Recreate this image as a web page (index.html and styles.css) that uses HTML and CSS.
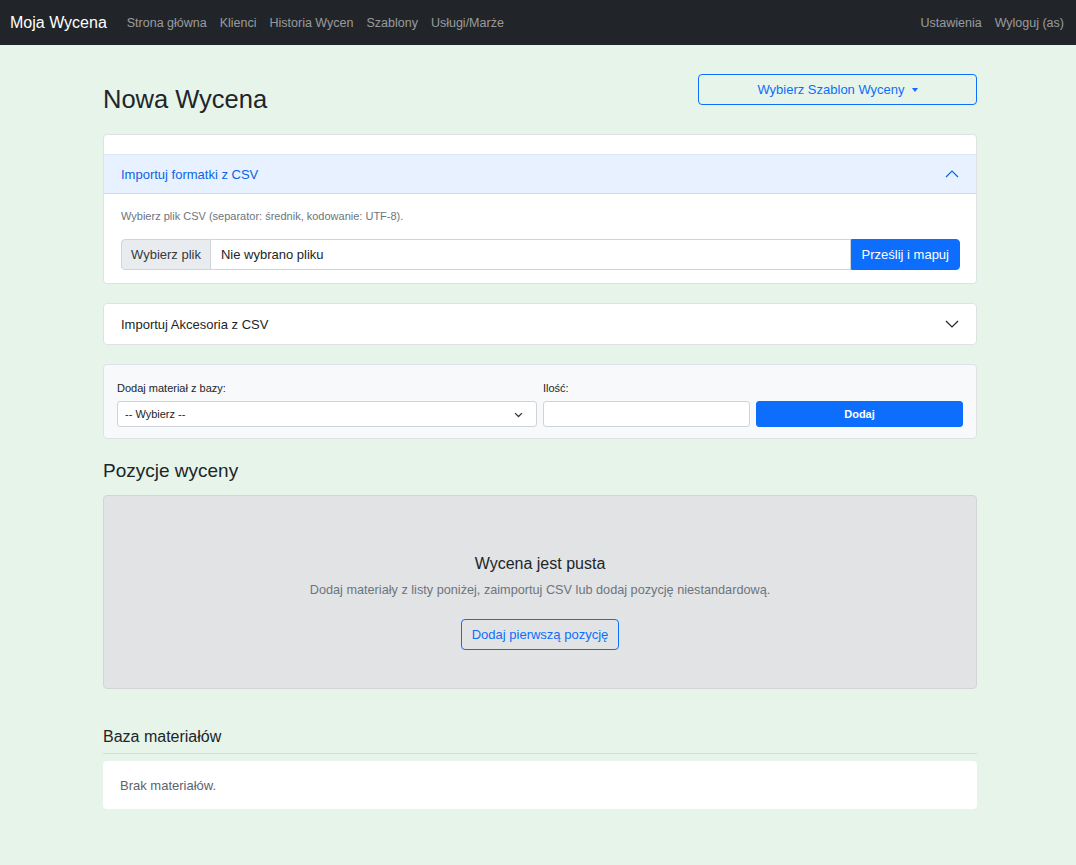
FILE: index.html
```html
<!DOCTYPE html>
<html lang="pl">
<head>
  <meta charset="UTF-8" />
  <link rel="stylesheet" href="styles.css">
</head>
<body>
  <nav class="navbar">
    <a class="brand" href="#">Moja Wycena</a>
    <ul class="nav-links">
      <li><a href="#">Strona główna</a></li>
      <li><a href="#">Klienci</a></li>
      <li><a href="#">Historia Wycen</a></li>
      <li><a href="#">Szablony</a></li>
      <li><a href="#">Usługi/Marże</a></li>
    </ul>
    <ul class="nav-links nav-right">
      <li><a href="#">Ustawienia</a></li>
      <li><a href="#">Wyloguj (as)</a></li>
    </ul>
  </nav>

  <main class="container">
    <div class="page-head">
      <h2>Nowa Wycena</h2>
      <button class="btn btn-outline dropdown-toggle">Wybierz Szablon Wyceny</button>
    </div>

    <!-- Import formatek -->
    <div class="card accordion">
      <div class="accordion-spacer"></div>
      <div class="accordion-header active">
        <span>Importuj formatki z CSV</span>
        <svg class="chevron" width="16" height="16" viewBox="0 0 16 16"><path d="M2 11 L8 5 L14 11" fill="none" stroke="currentColor" stroke-width="1.2"/></svg>
      </div>
      <div class="accordion-body">
        <p class="hint">Wybierz plik CSV (separator: średnik, kodowanie: UTF-8).</p>
        <div class="input-group">
          <span class="file-label">Wybierz plik</span>
          <span class="file-name">Nie wybrano pliku</span>
          <button class="btn btn-primary">Prześlij i mapuj</button>
        </div>
      </div>
    </div>

    <!-- Import akcesoriów -->
    <div class="card accordion">
      <div class="accordion-header">
        <span>Importuj Akcesoria z CSV</span>
        <svg class="chevron" width="16" height="16" viewBox="0 0 16 16"><path d="M2 5 L8 11 L14 5" fill="none" stroke="currentColor" stroke-width="1.2"/></svg>
      </div>
    </div>

    <!-- Dodaj materiał -->
    <div class="card add-card">
      <div class="add-grid">
        <label>Dodaj materiał z bazy:</label>
        <label>Ilość:</label>
        <span></span>
        <div class="select">
          <span>-- Wybierz --</span>
          <svg width="11" height="11" viewBox="0 0 16 16"><path d="M3 6 L8 11 L13 6" fill="none" stroke="#343a40" stroke-width="2"/></svg>
        </div>
        <div class="input"></div>
        <button class="btn btn-primary btn-sm">Dodaj</button>
      </div>
    </div>

    <h4 class="section-title">Pozycje wyceny</h4>
    <div class="empty-box">
      <h5>Wycena jest pusta</h5>
      <p>Dodaj materiały z listy poniżej, zaimportuj CSV lub dodaj pozycję niestandardową.</p>
      <button class="btn btn-outline">Dodaj pierwszą pozycję</button>
    </div>

    <h5 class="base-title">Baza materiałów</h5>
    <div class="card base-card">Brak materiałów.</div>
  </main>
</body>
</html>
```

FILE: styles.css
```css
:root {
  --primary: #0d6efd;
  --primary-dark: #0c63e4;
  --text-dark: #212529;
  --muted: #6c757d;
  --border: #dee2e6;
  --font-base: 'Liberation Sans', Arial, sans-serif;
}
*, *::before, *::after { box-sizing: border-box; }
body {
  margin: 0;
  font-family: var(--font-base);
  background: #e6f4e9;
  color: var(--text-dark);
  font-size: 13px;
}
a { text-decoration: none; }
ul { list-style: none; margin: 0; padding: 0; }
h2, h4, h5, p { margin: 0; font-weight: 400; }
button { font-family: inherit; cursor: pointer; }

/* Navbar */
.navbar {
  height: 45px;
  background: #212529;
  display: flex;
  align-items: center;
  padding: 0 12px 0 10px;
}
.brand { color: #fff; font-size: 16px; margin-right: 20px; }
.nav-links { display: flex; gap: 13px; }
.nav-links a { color: rgba(255,255,255,0.55); font-size: 12.5px; }
.nav-right { margin-left: auto; }

/* Page */
.container { width: 874px; margin: 0 99px 0 103px; padding-bottom: 56px; }
.page-head {
  display: flex;
  justify-content: space-between;
  align-items: flex-start;
  margin: 29px 0 19px;
}
.page-head h2 { font-size: 25.5px; line-height: 31px; margin-top: 10px; }

.btn {
  border-radius: 4px;
  font-size: 13px;
  height: 31px;
  padding: 0 12px;
  border: 1px solid transparent;
}
.btn-outline { background: transparent; color: var(--primary); border-color: var(--primary); }
.btn-primary { background: var(--primary); color: #fff; border-color: var(--primary); }
.btn-sm { font-size: 11px; font-weight: 700; height: 26px; border-radius: 3px; }
.dropdown-toggle { width: 279px; }
.dropdown-toggle::after {
  content: "";
  display: inline-block;
  margin-left: 7px;
  vertical-align: 2px;
  border-top: 4px solid;
  border-left: 3px solid transparent;
  border-right: 3px solid transparent;
}

.card {
  background: #fff;
  border: 1px solid var(--border);
  border-radius: 4px;
  margin-bottom: 19px;
}

/* Accordion */
.accordion-spacer { height: 19px; }
.accordion-header {
  height: 40px;
  display: flex;
  align-items: center;
  justify-content: space-between;
  padding: 0 16px 0 17px;
  font-size: 13px;
}
.accordion-header.active {
  background: #e7f1ff;
  color: var(--primary-dark);
  border-top: 1px solid #dbe7f8;
  border-bottom: 1px solid #c9dbf3;
}
.chevron { color: var(--text-dark); }
.accordion-header.active .chevron { color: var(--primary-dark); }
.accordion-body { padding: 15px 16px 13px 17px; }
.hint { font-size: 11px; color: var(--muted); line-height: 14px; margin-bottom: 16px; }
.input-group { display: flex; height: 31px; }
.file-label {
  display: flex;
  align-items: center;
  padding: 0 9px;
  background: #e9ecef;
  border: 1px solid #ced4da;
  border-radius: 4px 0 0 4px;
  color: #343a40;
}
.file-name {
  flex: 1;
  display: flex;
  align-items: center;
  padding: 0 10px;
  border: 1px solid #ced4da;
  border-left: none;
}
.input-group .btn { border-radius: 0 4px 4px 0; padding: 0 10px; }

/* Add material */
.add-card { background: #f8f9fa; padding: 16px 13px 11px 13px; margin-bottom: 21px; }
.add-grid {
  display: grid;
  grid-template-columns: 420px 1fr 1fr;
  column-gap: 6px;
  row-gap: 6px;
}
.add-grid label { font-size: 11px; line-height: 14px; }
.select, .input {
  height: 26px;
  background: #fff;
  border: 1px solid #ced4da;
  border-radius: 3px;
}
.select {
  display: flex;
  align-items: center;
  justify-content: space-between;
  padding: 0 12px 0 7px;
  font-size: 11px;
}

/* Positions */
.section-title { font-size: 19px; line-height: 22px; margin: 3px 0 13px; }
.empty-box {
  background: #e2e3e5;
  border: 1px solid #d3d6d8;
  border-radius: 4px;
  height: 194px;
  padding-top: 58px;
  text-align: center;
  margin-bottom: 38px;
}
.empty-box h5 { font-size: 16px; line-height: 20px; margin-bottom: 8px; }
.empty-box p { font-size: 12.7px; color: var(--muted); line-height: 16px; margin-bottom: 21px; }
.empty-box .btn { padding: 0 10px; }

.base-title {
  font-size: 16px;
  line-height: 20px;
  padding-bottom: 6px;
  border-bottom: 1px solid #d5ddd7;
  margin-bottom: 7px;
}
.base-card { border: none; height: 48px; padding: 0 17px; display: flex; align-items: center; color: #5c636a; }
```
